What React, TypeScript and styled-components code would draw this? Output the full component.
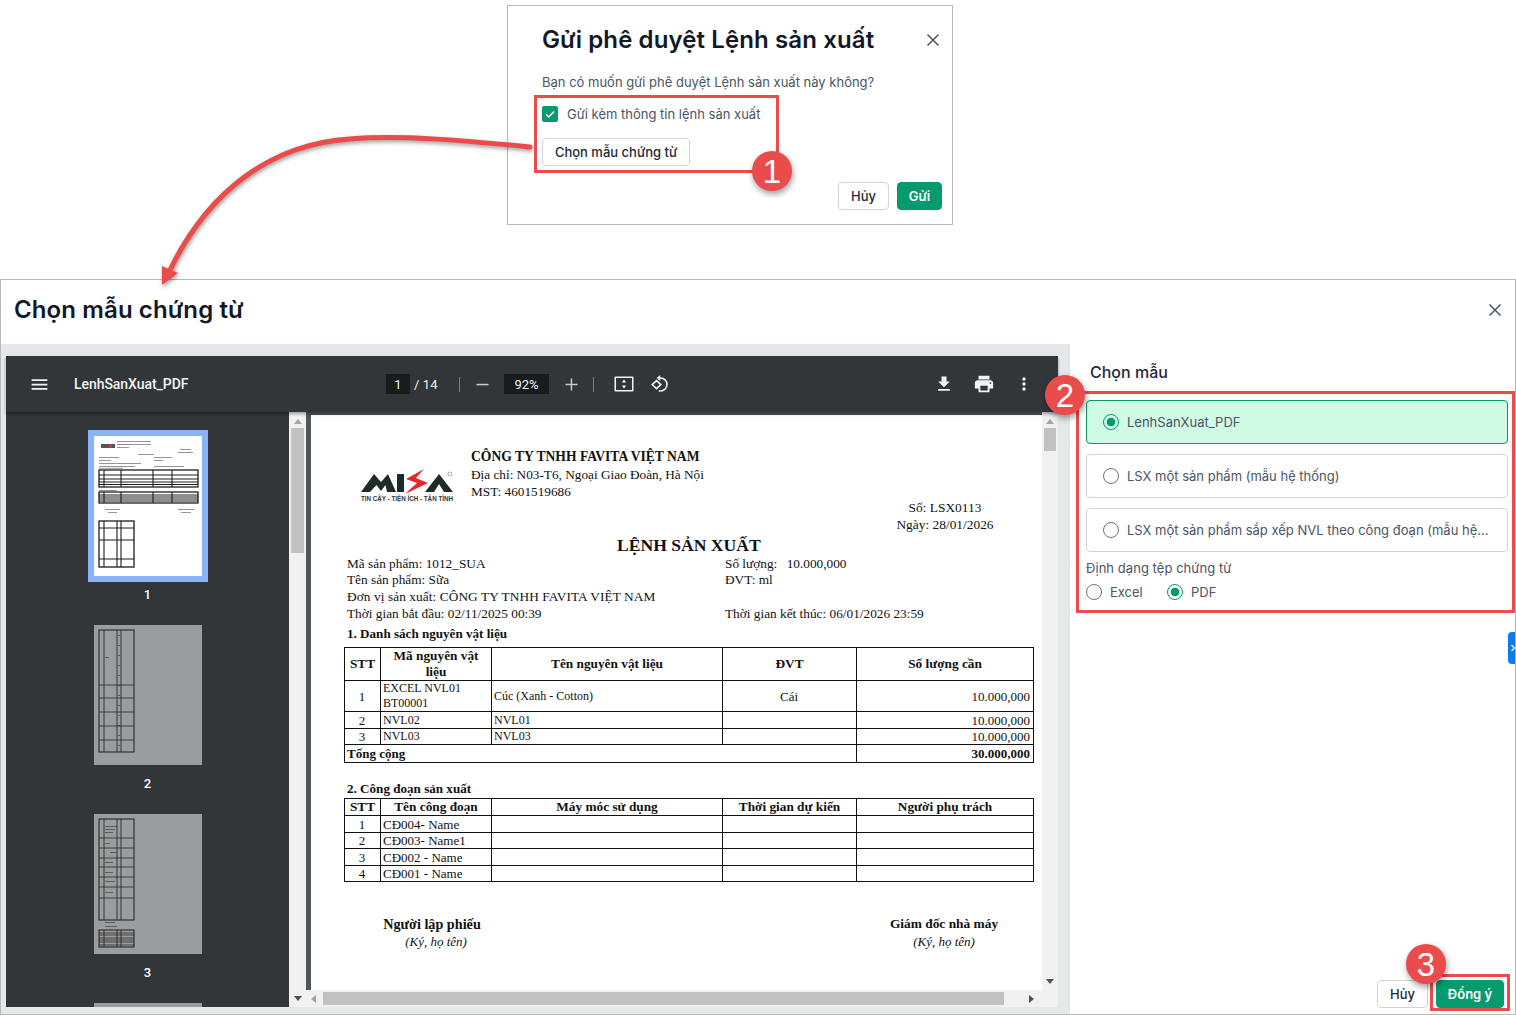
import React from "react";
import styled, { createGlobalStyle } from "styled-components";

const GREEN = "#069a6e";
const RED = "#ea4c4c";
const LINE = "#b8b8b8";
const UI_FONT = `Inter, "Noto Sans", sans-serif`;
const DOC_FONT = `"Liberation Serif", "Times New Roman", serif`;

const Global = createGlobalStyle`
  html, body { margin: 0; padding: 0; background: #fff; }
  * { box-sizing: border-box; }
`;

const Page = styled.div`
  position: relative;
  width: 1516px;
  height: 1015px;
  overflow: hidden;
  display: flex;
  flex-direction: column;
  font-family: ${UI_FONT};
  color: #1f2937;
`;

/* ---------- top dialog ---------- */
const TopArea = styled.div`
  height: 279px;
  padding: 5px 0 0 507px;
`;
const ConfirmDialog = styled.section`
  width: 446px;
  height: 220px;
  border: 1px solid ${LINE};
  padding: 18px 10px 0 34px;
  display: flex;
  flex-direction: column;
`;
const DialogHead = styled.div`
  display: flex;
  align-items: center;
  justify-content: space-between;
  height: 32px;
`;
const DialogTitle = styled.h2`
  margin: 0;
  font-size: 24px;
  line-height: 32px;
  font-weight: 600;
  letter-spacing: 0.11px;
  color: #111827;
  white-space: nowrap;
`;
const CloseIcon = styled.svg<{ $m?: number }>`
  width: 14px;
  height: 14px;
  margin-right: ${(p) => p.$m ?? 0}px;
  stroke: #4b5563;
  stroke-width: 1.5;
  fill: none;
  flex: none;
`;
const Question = styled.p`
  margin: 16px 0 0;
  font-size: 13px;
  line-height: 20px;
  color: #4b5563;
`;
const CheckRow = styled.label`
  margin-top: 12px;
  height: 20px;
  display: flex;
  align-items: center;
  gap: 9px;
  font-size: 13px;
  color: #4b5563;
`;
const CheckBox = styled.span`
  width: 16px;
  height: 16px;
  border-radius: 2px;
  background: ${GREEN};
  display: flex;
  align-items: center;
  justify-content: center;
`;
const Button = styled.button<{ $primary?: boolean; $w: number }>`
  width: ${(p) => p.$w}px;
  height: 28px;
  padding: 0;
  border-radius: 4px;
  font-family: ${UI_FONT};
  font-size: 13px;
  font-weight: ${(p) => (p.$primary ? 600 : 500)};
  border: 1px solid ${(p) => (p.$primary ? GREEN : "#d1d5db")};
  background: ${(p) => (p.$primary ? GREEN : "#fff")};
  color: ${(p) => (p.$primary ? "#fff" : "#1f2937")};
`;
const TemplateButton = styled(Button)`
  margin-top: 14px;
`;
const DialogActions = styled.div<{ $gap: number }>`
  display: flex;
  justify-content: flex-end;
  gap: ${(p) => p.$gap}px;
`;
const ConfirmActions = styled(DialogActions)`
  margin-top: 16px;
`;

/* ---------- main dialog ---------- */
const MainDialog = styled.section`
  height: 736px;
  border: 1px solid ${LINE};
  display: flex;
  flex-direction: column;
`;
const MainHead = styled.div`
  height: 64px;
  flex: none;
  padding: 0 13px 5px 13px;
  display: flex;
  align-items: center;
  justify-content: space-between;
`;
const MainBody = styled.div`
  flex: 1;
  min-height: 0;
  display: flex;
`;
const ViewerFrame = styled.div`
  width: 1069px;
  flex: none;
  padding: 12px 12px 7px 5px;
  background: #e5e7eb;
`;
const Viewer = styled.div`
  height: 100%;
  display: flex;
  flex-direction: column;
  background: #323639;
`;
const Toolbar = styled.div`
  position: relative;
  z-index: 1;
  height: 56px;
  flex: none;
  background: #323639;
  box-shadow: 0 2px 3px rgba(0, 0, 0, 0.35);
  display: flex;
  align-items: center;
  color: #f1f3f4;
  font-family: Roboto, sans-serif;
  font-size: 13px;
`;
const ToolIcon = styled.svg<{ $ml: number; $size: number }>`
  width: ${(p) => p.$size}px;
  height: ${(p) => p.$size}px;
  margin-left: ${(p) => p.$ml}px;
  flex: none;
  fill: #f1f3f4;
`;
const ZoomStep = styled(ToolIcon)`
  fill: #c9cacb;
`;
const DocName = styled.span`
  margin-left: 24px;
  width: 312px;
  font-size: 14px;
  font-weight: 500;
  letter-spacing: -0.05px;
`;
const FieldBox = styled.span<{ $w: number }>`
  width: ${(p) => p.$w}px;
  height: 20px;
  background: #191b1c;
  display: flex;
  align-items: center;
  justify-content: center;
  font-size: 13px;
`;
const PageCount = styled.span`
  margin-left: 4px;
  width: 45px;
  font-size: 13px;
  letter-spacing: 0.1px;
`;
const Separator = styled.span<{ $ml: number }>`
  width: 1px;
  height: 15px;
  margin-left: ${(p) => p.$ml}px;
  background: #7b7e80;
`;
const ZoomBox = styled(FieldBox)`
  margin-left: 13px;
`;
const ToolRight = styled.div`
  margin-left: auto;
  display: flex;
  align-items: center;
  padding-right: 24px;
`;
const ViewerBody = styled.div`
  flex: 1;
  min-height: 0;
  display: flex;
`;
const Sidebar = styled.div`
  width: 283px;
  flex: none;
  padding-top: 18px;
  overflow: hidden;
  display: flex;
  flex-direction: column;
  align-items: center;
`;
const ThumbItem = styled.div`
  flex: none;
  height: 189px;
  display: flex;
  flex-direction: column;
  align-items: center;
`;
const ThumbFrame = styled.div<{ $active?: boolean }>`
  width: 120px;
  height: 152px;
  flex: none;
  border: 6px solid ${(p) => (p.$active ? "#8ab4f8" : "transparent")};
`;
const ThumbArt = styled.svg`
  display: block;
  width: 108px;
  height: 140px;
`;
const ThumbLabel = styled.span`
  margin-top: 1px;
  height: 24px;
  line-height: 24px;
  font-family: Roboto, sans-serif;
  font-size: 13px;
  font-weight: 500;
  color: #fff;
`;
const ScrollTrack = styled.div<{ $w?: number }>`
  width: ${(p) => p.$w ?? 17}px;
  flex: none;
  background: #f1f1f1;
  display: flex;
  flex-direction: column;
  align-items: center;
`;
const ScrollArrow = styled.span<{ $dir: "up" | "down" | "left" | "right"; $dim?: boolean }>`
  width: 0;
  height: 0;
  flex: none;
  border-style: solid;
  border-color: transparent;
  ${(p) =>
    p.$dir === "up"
      ? `border-width: 0 4px 5px; border-bottom-color: ${p.$dim ? "#a3a3a3" : "#505050"};`
      : p.$dir === "down"
      ? `border-width: 5px 4px 0; border-top-color: ${p.$dim ? "#a3a3a3" : "#505050"};`
      : p.$dir === "left"
      ? `border-width: 4px 5px 4px 0; border-right-color: ${p.$dim ? "#a3a3a3" : "#505050"};`
      : `border-width: 4px 0 4px 5px; border-left-color: ${p.$dim ? "#a3a3a3" : "#505050"};`}
`;
const UpArrow = styled(ScrollArrow)`
  margin-top: 7px;
`;
const DownArrow = styled(ScrollArrow)`
  margin: auto 0 6px;
`;
const VThumb = styled.div<{ $top: number; $h: number; $w: number }>`
  width: ${(p) => p.$w}px;
  height: ${(p) => p.$h}px;
  margin-top: ${(p) => p.$top}px;
  background: #c1c1c1;
`;
const PageArea = styled.div`
  flex: 1;
  min-width: 0;
  display: flex;
  flex-direction: column;
  background: #525659;
`;
const PageRow = styled.div`
  flex: 1;
  min-height: 0;
  display: flex;
`;
const PageShell = styled.div`
  flex: 1;
  min-width: 0;
  padding: 3px 0 0 5px;
  overflow: hidden;
`;
const HScroll = styled.div`
  height: 17px;
  flex: none;
  background: #f1f1f1;
  display: flex;
  align-items: center;
  padding-left: 5px;
`;
const HThumb = styled.div`
  width: 681px;
  height: 13px;
  margin-left: 7px;
  background: #c1c1c1;
`;
const HEnd = styled.div`
  flex: 1;
  display: flex;
  align-items: center;
  justify-content: flex-end;
  padding-right: 24px;
`;

/* ---------- document ---------- */
const Sheet = styled.article`
  height: 100%;
  background: #fff;
  padding: 33px 0 0 36px;
  font-family: ${DOC_FONT};
  font-size: 13px;
  line-height: 17px;
  color: #111;
  overflow: hidden;
`;
const DocHeader = styled.header`
  display: flex;
  height: 52px;
`;
const LogoArt = styled.svg`
  width: 92px;
  height: 33px;
  margin: 21px 18px 0 14px;
  flex: none;
`;
const CompanyLines = styled.div`
  font-size: 13.25px;
  line-height: 17.5px;
  white-space: nowrap;
`;
const CompanyName = styled.div`
  font-size: 13.6px;
  font-weight: 700;
`;
const DocNumber = styled.div`
  margin: 0 0 0 543px;
  width: 110px;
  text-align: center;
  font-size: 13.4px;
  line-height: 16.8px;
  white-space: nowrap;
`;
const DocTitle = styled.h1`
  margin: 1px 0 0;
  padding-left: 270px;
  font-size: 17.6px;
  line-height: 21px;
  font-weight: 700;
  white-space: nowrap;
`;
const InfoGrid = styled.div`
  display: grid;
  grid-template-columns: 378px 1fr;
  grid-auto-rows: 16.7px;
  font-size: 13.3px;
  line-height: 16.7px;
  white-space: nowrap;
`;
const Qty = styled.span`
  margin-left: 6px;
`;
const Wide = styled.span`
  letter-spacing: 0.09px;
`;
const SectionHead = styled.h3<{ $mt: number }>`
  margin: ${(p) => p.$mt}px 0 0;
  font-size: 13.1px;
  line-height: 16px;
  font-weight: 700;
`;
const DocTable = styled.table<{ $mt: number }>`
  margin: ${(p) => p.$mt}px 0 0 -3px;
  width: 689px;
  table-layout: fixed;
  border-collapse: collapse;
  font-size: 13px;
  line-height: 15px;
  border: 1.5px solid #111;
`;
const Th = styled.th`
  border: 1px solid #111;
  padding: 0 1px;
  font-size: 13.3px;
  line-height: 16px;
  font-weight: 700;
  text-align: center;
  white-space: nowrap;
`;
const Td = styled.td<{ $align?: string; $bold?: boolean; $small?: boolean }>`
  border: 1px solid #111;
  padding: 0 3px 0 2px;
  font-size: ${(p) => (p.$small ? 12 : 13)}px;
  text-align: ${(p) => p.$align ?? "left"};
  font-weight: ${(p) => (p.$bold ? 700 : 400)};
  white-space: nowrap;
`;
const Tr = styled.tr<{ $h: number }>`
  height: ${(p) => p.$h}px;
`;
const Signatures = styled.div`
  margin: 33px 0 0 0;
  display: flex;
  gap: 327px;
  line-height: 18px;
  text-align: center;
`;
const SignBlock = styled.div<{ $w: number }>`
  width: ${(p) => p.$w}px;
  flex: none;
`;
const SignName = styled.div<{ $size: number }>`
  font-size: ${(p) => p.$size}px;
  font-weight: 700;
`;
const SignHint = styled.div<{ $ml?: number }>`
  margin-left: ${(p) => p.$ml ?? 0}px;
  font-size: 13px;
  font-style: italic;
`;

/* ---------- side panel ---------- */
const SidePanel = styled.aside`
  flex: 1;
  min-width: 0;
  padding: 16px 7px 6px 16px;
  display: flex;
  flex-direction: column;
`;
const PanelTitle = styled.h4`
  margin: 0 0 16px 4px;
  font-size: 16px;
  line-height: 24px;
  font-weight: 500;
  color: #1f2937;
`;
const OptionList = styled.div`
  display: flex;
  flex-direction: column;
  gap: 10px;
`;
const OptionCard = styled.label<{ $on?: boolean }>`
  height: 44px;
  padding: 0 16px;
  display: flex;
  align-items: center;
  gap: 8px;
  border-radius: 4px;
  border: 1px solid ${(p) => (p.$on ? GREEN : "#d1d5db")};
  background: ${(p) => (p.$on ? "#cffae4" : "#fff")};
  font-size: 13px;
  color: #4b5563;
`;
const OptionText = styled.span`
  white-space: nowrap;
  overflow: hidden;
  text-overflow: ellipsis;
`;
const Radio = styled.span<{ $on?: boolean }>`
  width: 16px;
  height: 16px;
  flex: none;
  border-radius: 50%;
  border: ${(p) => (p.$on ? `1.5px solid ${GREEN}` : "1px solid #6b7280")};
  background: ${(p) =>
    p.$on ? `radial-gradient(circle, ${GREEN} 0 4px, transparent 4.6px)` : "#fff"};
`;
const FormatLabel = styled.div`
  margin-top: 6px;
  height: 20px;
  line-height: 20px;
  font-size: 13px;
  letter-spacing: 0.05px;
  color: #4b5563;
`;
const FormatRow = styled.div`
  margin-top: 4px;
  height: 20px;
  display: flex;
  align-items: center;
  font-size: 13px;
  color: #4b5563;
`;
const FormatOption = styled.label<{ $w: number }>`
  width: ${(p) => p.$w}px;
  display: flex;
  align-items: center;
  gap: 8px;
`;
const PanelFooter = styled(DialogActions)`
  margin-top: auto;
  padding-right: 4px;
`;

/* ---------- annotation overlays ---------- */
const RedFrame = styled.div<{ $x: number; $y: number; $w: number; $h: number }>`
  position: absolute;
  z-index: 2;
  left: ${(p) => p.$x}px;
  top: ${(p) => p.$y}px;
  width: ${(p) => p.$w}px;
  height: ${(p) => p.$h}px;
  border: 3px solid ${RED};
`;
const Badge = styled.div<{ $x: number; $y: number }>`
  position: absolute;
  z-index: 3;
  left: ${(p) => p.$x - 20}px;
  top: ${(p) => p.$y - 20}px;
  width: 40px;
  height: 40px;
  border-radius: 50%;
  background: ${RED};
  box-shadow: 1px 3px 6px rgba(0, 0, 0, 0.4);
  display: flex;
  align-items: center;
  justify-content: center;
  color: #fff;
  font-family: "Liberation Sans", Arial, sans-serif;
  font-size: 33px;
  line-height: 1;
`;
const ArrowArt = styled.svg`
  position: absolute;
  z-index: 2;
  left: 140px;
  top: 120px;
  width: 410px;
  height: 180px;
  overflow: visible;
  filter: drop-shadow(1px 2px 2px rgba(0, 0, 0, 0.4));
`;
const SideTab = styled.div`
  position: absolute;
  left: 1508px;
  top: 632px;
  width: 7px;
  height: 32px;
  border-radius: 4px 0 0 4px;
  background: #0b7cf0;
  display: flex;
  align-items: center;
  justify-content: flex-end;
`;

/* ---------- drawings ---------- */
const X = ({ m }: { m?: number }) => (
  <CloseIcon $m={m} viewBox="0 0 14 14">
    <path d="M1.5 1.5l11 11M12.5 1.5l-11 11" />
  </CloseIcon>
);

const THUMB_INK = "#1d1d1d";

const Grid = ({ x, y, w, h, rows, cols, bold = 0.7 }: { x: number; y: number; w: number; h: number; rows: number[]; cols: number[]; bold?: number }) => (
  <g stroke={THUMB_INK} fill="none">
    <rect x={x} y={y} width={w} height={h} strokeWidth={bold + 0.3} />
    {rows.map((r) => (
      <line key={r} x1={x} x2={x + w} y1={r} y2={r} strokeWidth={bold} />
    ))}
    {cols.map((c) => (
      <line key={c} x1={c} x2={c} y1={y} y2={y + h} strokeWidth={bold + 0.1} />
    ))}
  </g>
);

const TextBars = ({ bars, tone = "#8a8a8a" }: { bars: [number, number, number][]; tone?: string }) => (
  <g fill={tone}>
    {bars.map(([x, y, w], i) => (
      <rect key={i} x={x} y={y} width={w} height={0.9} />
    ))}
  </g>
);

const ThumbOne = () => (
  <ThumbArt viewBox="0 0 108 140">
    <rect width="108" height="140" fill="#fff" />
    <rect x="7" y="8" width="14" height="4" fill="#555" />
    <rect x="15" y="8" width="3" height="4" fill="#d33" />
    <TextBars
      bars={[
        [23, 5, 34], [23, 8, 34], [23, 11, 12], [86, 13, 11], [84, 16, 15], [44, 18, 16],
        [5, 21, 20], [60, 21, 18], [5, 24, 12], [60, 24, 9], [5, 27, 42], [5, 30, 36],
        [60, 30, 30], [5, 31.8, 24], [5, 54, 18], [11, 73, 15], [84, 73, 16], [14, 76, 9], [87, 76, 10],
      ]}
    />
    <Grid x={5} y={34} w={99} h={17} rows={[39, 43, 46, 48.5]} cols={[10, 27, 59, 78]} bold={1} />
    <Grid x={5} y={56} w={99} h={11} rows={[59, 61, 63, 65]} cols={[10, 27, 59, 78]} bold={1} />
    <Grid x={5} y={85} w={35} h={46} rows={[92, 104, 123]} cols={[10, 23, 27]} bold={1} />
  </ThumbArt>
);

const ThumbTwo = () => (
  <ThumbArt viewBox="0 0 108 140">
    <rect width="108" height="140" fill="#9b9c9d" />
    <TextBars tone="#555" bars={[[11, 32, 4], [24, 10, 2], [24, 20, 2], [24, 30, 2], [24, 40, 2], [24, 50, 2], [24, 60, 2], [24, 70, 2], [24, 80, 2], [24, 90, 2], [24, 100, 2], [24, 110, 2], [24, 120, 2]]} />
    <Grid x={5} y={5} w={35} h={122} rows={[60, 73, 87, 101, 115]} cols={[10, 23, 27]} />
  </ThumbArt>
);

const ThumbThree = () => (
  <ThumbArt viewBox="0 0 108 140">
    <rect width="108" height="140" fill="#9b9c9d" />
    <TextBars tone="#555" bars={[[11, 12, 12], [11, 15, 10], [11, 18, 8], [11, 29, 5], [16, 38, 7], [11, 48, 8], [11, 58, 8], [11, 67, 10], [11, 78, 8], [11, 108, 10], [11, 112, 12]]} />
    <Grid x={5} y={5} w={35} h={101} rows={[24, 34, 44, 53, 63, 73, 84]} cols={[10, 23, 27]} />
    <Grid x={5} y={116} w={35} h={17} rows={[119, 121, 124, 126, 128, 131]} cols={[10, 23, 27]} />
  </ThumbArt>
);

const Logo = () => (
  <LogoArt viewBox="0 0 92 33">
    <polygon fill="#1f2b27" points="0,23 13,5 20,13 27,5 35,23 26,23 24.5,16 20,22 15.5,16 9,23" />
    <rect x="36" y="5" width="7" height="18" fill="#1f2b27" />
    <polygon fill="#e8262c" points="63,0 45,10 56,14 44,25 67,14 55,9" />
    <polygon fill="#1f2b27" points="64,23 78,5 92,23 83,23 78,15 73,23" />
    <circle cx="89" cy="5" r="2" fill="none" stroke="#555" strokeWidth="0.5" />
    <text x="0" y="31.5" fontFamily="'Liberation Sans', sans-serif" fontSize="6.3" fontWeight="700" fill="#333" textLength="92" lengthAdjust="spacingAndGlyphs">
      TIN CẬY - TIỆN ÍCH - TẬN TÌNH
    </text>
  </LogoArt>
);

const materials = [
  { stt: "1", code: ["EXCEL NVL01", "BT00001"], name: "Cúc (Xanh - Cotton)", unit: "Cái", qty: "10.000,000", h: 31 },
  { stt: "2", code: ["NVL02"], name: "NVL01", unit: "", qty: "10.000,000", h: 17 },
  { stt: "3", code: ["NVL03"], name: "NVL03", unit: "", qty: "10.000,000", h: 16 },
];
const stages = [
  ["1", "CĐ004- Name"],
  ["2", "CĐ003- Name1"],
  ["3", "CĐ002 - Name"],
  ["4", "CĐ001 - Name"],
];
const Cols = () => (
  <colgroup>
    <col width="36" />
    <col width="111" />
    <col width="231" />
    <col width="134" />
    <col width="177" />
  </colgroup>
);

export default function App() {
  return (
    <Page>
      <Global />
      <TopArea>
        <ConfirmDialog>
          <DialogHead>
            <DialogTitle>Gửi phê duyệt Lệnh sản xuất</DialogTitle>
            <X m={2} />
          </DialogHead>
          <Question>Bạn có muốn gửi phê duyệt Lệnh sản xuất này không?</Question>
          <CheckRow>
            <CheckBox>
              <svg width="12" height="12" viewBox="0 0 12 12" fill="none" stroke="#fff" strokeWidth="1.4">
                <path d="M2 6.3l2.8 2.7L10 3.4" />
              </svg>
            </CheckBox>
            Gửi kèm thông tin lệnh sản xuất
          </CheckRow>
          <TemplateButton $w={148}>Chọn mẫu chứng từ</TemplateButton>
          <ConfirmActions $gap={8}>
            <Button $w={51}>Hủy</Button>
            <Button $w={45} $primary>Gửi</Button>
          </ConfirmActions>
        </ConfirmDialog>
      </TopArea>

      <MainDialog>
        <MainHead>
          <DialogTitle>Chọn mẫu chứng từ</DialogTitle>
          <X />
        </MainHead>
        <MainBody>
          <ViewerFrame>
            <Viewer>
              <Toolbar>
                <ToolIcon $ml={23} $size={21} viewBox="0 0 24 24">
                  <path d="M3 18h18v-2H3v2zm0-5h18v-2H3v2zm0-7v2h18V6H3z" />
                </ToolIcon>
                <DocName>LenhSanXuat_PDF</DocName>
                <FieldBox $w={24}>1</FieldBox>
                <PageCount>/ 14</PageCount>
                <Separator $ml={0} />
                <ZoomStep $ml={14} $size={17} viewBox="0 0 17 17">
                  <rect x="2.5" y="7.8" width="12" height="1.5" />
                </ZoomStep>
                <ZoomBox $w={45}>92%</ZoomBox>
                <ZoomStep $ml={14} $size={17} viewBox="0 0 17 17">
                  <path d="M2.5 7.8h5.2V2.5h1.5v5.3h5.3v1.5H9.2v5.2H7.7V9.3H2.5z" />
                </ZoomStep>
                <Separator $ml={13} />
                <ToolIcon $ml={20} $size={20} viewBox="0 0 20 20">
                  <path fillRule="evenodd" d="M1.5 2.5h17a1 1 0 0 1 1 1v13a1 1 0 0 1-1 1h-17a1 1 0 0 1-1-1v-13a1 1 0 0 1 1-1zm.5 1.5v12h16V4z" />
                  <path d="M10 5.6l2.2 2.8H7.8zM10 14.4l-2.2-2.8h4.4z" />
                </ToolIcon>
                <ToolIcon $ml={16} $size={20} viewBox="0 0 20 20">
                  <path d="M10.2 1l-3.6 3 3.6 3z" />
                  <path d="M9.5 4h1a6.5 6.5 0 0 1 0 13H8.8" fill="none" stroke="#f1f3f4" strokeWidth="1.6" />
                  <path d="M6.6 6.6l4.2 4-4.2 4-4.4-4z" fill="none" stroke="#f1f3f4" strokeWidth="1.6" />
                </ToolIcon>
                <ToolRight>
                  <ToolIcon $ml={0} $size={20} viewBox="0 0 24 24">
                    <path d="M19 9h-4V3H9v6H5l7 7 7-7zM5 18v2h14v-2H5z" />
                  </ToolIcon>
                  <ToolIcon $ml={19} $size={22} viewBox="0 0 24 24">
                    <path d="M19 8H5c-1.66 0-3 1.34-3 3v6h4v4h12v-4h4v-6c0-1.66-1.34-3-3-3zm-3 11H8v-5h8v5zm3-7c-.55 0-1-.45-1-1s.45-1 1-1 1 .45 1 1-.45 1-1 1zm-1-9H6v4h12V3z" />
                  </ToolIcon>
                  <ToolIcon $ml={19} $size={20} viewBox="0 0 24 24">
                    <path d="M12 8c1.1 0 2-.9 2-2s-.9-2-2-2-2 .9-2 2 .9 2 2 2zm0 2c-1.1 0-2 .9-2 2s.9 2 2 2 2-.9 2-2-.9-2-2-2zm0 6c-1.1 0-2 .9-2 2s.9 2 2 2 2-.9 2-2-.9-2-2-2z" />
                  </ToolIcon>
                </ToolRight>
              </Toolbar>
              <ViewerBody>
                <Sidebar>
                  <ThumbItem>
                    <ThumbFrame $active><ThumbOne /></ThumbFrame>
                    <ThumbLabel>1</ThumbLabel>
                  </ThumbItem>
                  <ThumbItem>
                    <ThumbFrame><ThumbTwo /></ThumbFrame>
                    <ThumbLabel>2</ThumbLabel>
                  </ThumbItem>
                  <ThumbItem>
                    <ThumbFrame><ThumbThree /></ThumbFrame>
                    <ThumbLabel>3</ThumbLabel>
                  </ThumbItem>
                  <ThumbItem>
                    <ThumbFrame><ThumbTwo /></ThumbFrame>
                  </ThumbItem>
                </Sidebar>
                <ScrollTrack>
                  <UpArrow $dir="up" $dim />
                  <VThumb $top={4} $h={125} $w={13} />
                  <DownArrow $dir="down" />
                </ScrollTrack>
                <PageArea>
                  <PageRow>
                    <PageShell>
                      <Sheet>
                        <DocHeader>
                          <Logo />
                          <CompanyLines>
                            <CompanyName>CÔNG TY TNHH FAVITA VIỆT NAM</CompanyName>
                            <div>Địa chỉ: N03-T6, Ngoại Giao Đoàn, Hà Nội</div>
                            <div>MST: 4601519686</div>
                          </CompanyLines>
                        </DocHeader>
                        <DocNumber>
                          <div>Số: LSX0113</div>
                          <div>Ngày: 28/01/2026</div>
                        </DocNumber>
                        <DocTitle>LỆNH SẢN XUẤT</DocTitle>
                        <InfoGrid>
                          <span>Mã sản phẩm: 1012_SUA</span>
                          <span>Số lượng: <Qty>10.000,000</Qty></span>
                          <span>Tên sản phẩm: Sữa</span>
                          <span>ĐVT: ml</span>
                          <Wide>Đơn vị sản xuất: CÔNG TY TNHH FAVITA VIỆT NAM</Wide>
                          <span />
                          <span>Thời gian bắt đầu: 02/11/2025 00:39</span>
                          <span>Thời gian kết thúc: 06/01/2026 23:59</span>
                        </InfoGrid>
                        <SectionHead $mt={4}>1. Danh sách nguyên vật liệu</SectionHead>
                        <DocTable $mt={5}>
                          <Cols />
                          <tbody>
                            <Tr $h={33}>
                              <Th>STT</Th>
                              <Th>Mã nguyên vật<br />liệu</Th>
                              <Th>Tên nguyên vật liệu</Th>
                              <Th>ĐVT</Th>
                              <Th>Số lượng cần</Th>
                            </Tr>
                            {materials.map((m) => (
                              <Tr key={m.stt} $h={m.h}>
                                <Td $align="center">{m.stt}</Td>
                                <Td $small>{m.code.map((c, i) => <div key={i}>{c}</div>)}</Td>
                                <Td $small>{m.name}</Td>
                                <Td $align="center">{m.unit}</Td>
                                <Td $align="right">{m.qty}</Td>
                              </Tr>
                            ))}
                            <Tr $h={18}>
                              <Td colSpan={4} $bold>Tổng cộng</Td>
                              <Td $align="right" $bold>30.000,000</Td>
                            </Tr>
                          </tbody>
                        </DocTable>
                        <SectionHead $mt={18}>2. Công đoạn sản xuất</SectionHead>
                        <DocTable $mt={1}>
                          <Cols />
                          <tbody>
                            <Tr $h={17}>
                              <Th>STT</Th>
                              <Th>Tên công đoạn</Th>
                              <Th>Máy móc sử dụng</Th>
                              <Th>Thời gian dự kiến</Th>
                              <Th>Người phụ trách</Th>
                            </Tr>
                            {stages.map(([n, s]) => (
                              <Tr key={n} $h={16.5}>
                                <Td $align="center">{n}</Td>
                                <Td>{s}</Td>
                                <Td />
                                <Td />
                                <Td />
                              </Tr>
                            ))}
                          </tbody>
                        </DocTable>
                        <Signatures>
                          <SignBlock $w={170}>
                            <SignName $size={14.2}>Người lập phiếu</SignName>
                            <SignHint $ml={8}>(Ký, họ tên)</SignHint>
                          </SignBlock>
                          <SignBlock $w={200}>
                            <SignName $size={13.4}>Giám đốc nhà máy</SignName>
                            <SignHint>(Ký, họ tên)</SignHint>
                          </SignBlock>
                        </Signatures>
                      </Sheet>
                    </PageShell>
                    <ScrollTrack $w={16}>
                      <UpArrow $dir="up" $dim />
                      <VThumb $top={4} $h={23} $w={12} />
                      <DownArrow $dir="down" />
                    </ScrollTrack>
                  </PageRow>
                  <HScroll>
                    <ScrollArrow $dir="left" $dim />
                    <HThumb />
                    <HEnd>
                      <ScrollArrow $dir="right" />
                    </HEnd>
                  </HScroll>
                </PageArea>
              </ViewerBody>
            </Viewer>
          </ViewerFrame>
          <SidePanel>
            <PanelTitle>Chọn mẫu</PanelTitle>
            <OptionList>
              <OptionCard $on>
                <Radio $on />
                <OptionText>LenhSanXuat_PDF</OptionText>
              </OptionCard>
              <OptionCard>
                <Radio />
                <OptionText>LSX một sản phẩm (mẫu hệ thống)</OptionText>
              </OptionCard>
              <OptionCard>
                <Radio />
                <OptionText>LSX một sản phẩm sắp xếp NVL theo công đoạn (mẫu hệ thống)</OptionText>
              </OptionCard>
            </OptionList>
            <FormatLabel>Định dạng tệp chứng từ</FormatLabel>
            <FormatRow>
              <FormatOption $w={81}>
                <Radio />
                Excel
              </FormatOption>
              <FormatOption $w={70}>
                <Radio $on />
                PDF
              </FormatOption>
            </FormatRow>
            <PanelFooter $gap={8}>
              <Button $w={51}>Hủy</Button>
              <Button $w={68} $primary>Đồng ý</Button>
            </PanelFooter>
          </SidePanel>
        </MainBody>
      </MainDialog>

      <ArrowArt viewBox="0 0 410 180">
        <path
          d="M390 27 C 320 20, 260 15, 210 19 C 130 24, 68 72, 30 150"
          fill="none"
          stroke={RED}
          strokeWidth="5"
          strokeLinecap="round"
        />
        <polygon fill={RED} points="22,165 22,146 38,153" />
      </ArrowArt>
      <RedFrame $x={534} $y={95} $w={245} $h={78} />
      <RedFrame $x={1076} $y={391} $w={439} $h={222} />
      <RedFrame $x={1430} $y={974} $w={80} $h={37} />
      <Badge $x={772} $y={171}>1</Badge>
      <Badge $x={1065} $y={395}>2</Badge>
      <Badge $x={1426} $y={964}>3</Badge>
      <SideTab>
        <svg width="4" height="8" viewBox="0 0 4 8" fill="none" stroke="#fff" strokeWidth="1.2">
          <path d="M0.5 1l3 3-3 3" />
        </svg>
      </SideTab>
    </Page>
  );
}
